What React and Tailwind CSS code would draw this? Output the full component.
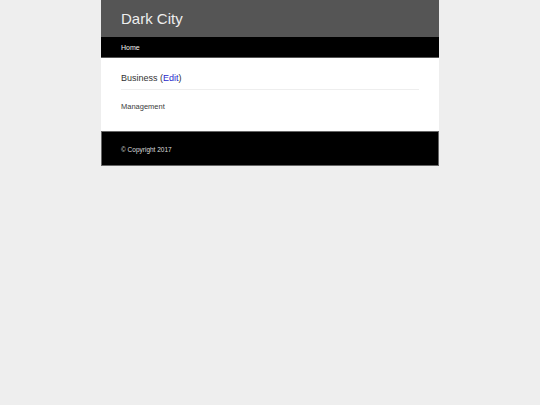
export default function App() {
  return (
    <div className="min-h-screen bg-[#eeeeee]" style={{ fontFamily: '"Liberation Sans", Arial, sans-serif' }}>
      <div className="w-[338px] mx-auto">
        <header className="h-[37px] bg-[#555555] flex items-center px-[20px]">
          <h1 className="text-[15px] leading-none text-[#eeeeee]">Dark City</h1>
        </header>
        <nav className="h-[21px] bg-black flex items-center px-[20px] border-b border-[#555]">
          <a className="text-[7px] leading-none text-[#f2f2f2]">Home</a>
        </nav>
        <main className="bg-white px-[20px] pt-[16px] pb-[20.5px]">
          <h2 className="text-[9px] leading-none text-[#333333]">
            Business (<a className="text-[#2a2acc]">Edit</a>)
          </h2>
          <div className="mt-[6px] border-t border-[#eeeeee]" />
          <p className="mt-[13px] text-[7.5px] leading-none text-[#3a3a3a]">Management</p>
        </main>
        <footer className="h-[35px] bg-black border border-[#666] flex items-center px-[19px] pt-[3px]">
          <span className="text-[6.5px] leading-none text-[#dddddd]">© Copyright 2017</span>
        </footer>
      </div>
    </div>
  );
}
